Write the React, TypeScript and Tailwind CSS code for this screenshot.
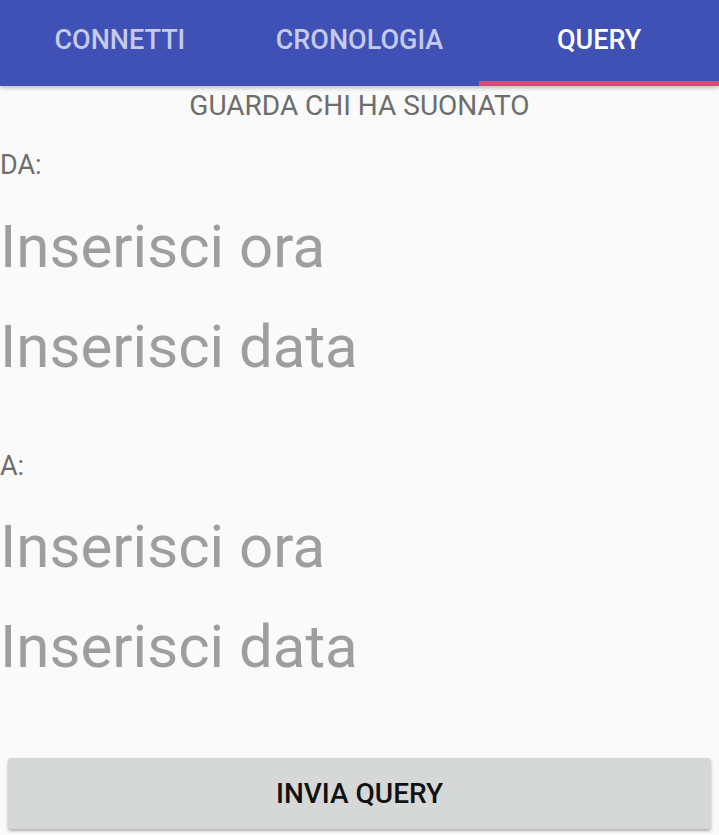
export default function App() {
  const tabs = ["CONNETTI", "CRONOLOGIA", "QUERY"];

  return (
    <div className="w-[719px] h-[835px] bg-[#fafafa] flex flex-col font-['Roboto',sans-serif] overflow-hidden">
      <div className="h-[86px] bg-[#3f51b5] grid grid-cols-3 shadow-[0_2px_4px_rgba(0,0,0,0.25)] relative z-10">
        {tabs.map((t, i) => (
          <div key={t} className="flex flex-col">
            <div
              className={`flex-1 flex items-center justify-center pb-[1px] text-[27px] font-medium ${
                i === 2 ? "text-white" : "text-[#c5cae9]"
              }`}
            >
              {t}
            </div>
            <div className={`h-[5px] ${i === 2 ? "bg-[#ec407a]" : ""}`}></div>
          </div>
        ))}
      </div>

      <div className="text-center text-[28px] text-[#6d6d6d] leading-none mt-[6px]">
        GUARDA CHI HA SUONATO
      </div>

      <div className="text-[27px] text-[#6d6d6d] leading-none mt-[32px]">DA:</div>
      <div className="text-[60px] text-[#9e9e9e] leading-none mt-[38px]">Inserisci ora</div>
      <div className="text-[60px] text-[#9e9e9e] leading-none mt-[40px]">Inserisci data</div>

      <div className="text-[27px] text-[#6d6d6d] leading-none mt-[76px]">A:</div>
      <div className="text-[60px] text-[#9e9e9e] leading-none mt-[37px]">Inserisci ora</div>
      <div className="text-[60px] text-[#9e9e9e] leading-none mt-[40px]">Inserisci data</div>

      <div className="px-[8px] mt-auto mb-[6px]">
        <button className="w-full h-[71px] bg-[#d6d7d7] rounded-[3px] shadow-[0_2px_3px_rgba(0,0,0,0.3)] text-[28px] font-medium text-[#111]">
          INVIA QUERY
        </button>
      </div>
    </div>
  );
}
